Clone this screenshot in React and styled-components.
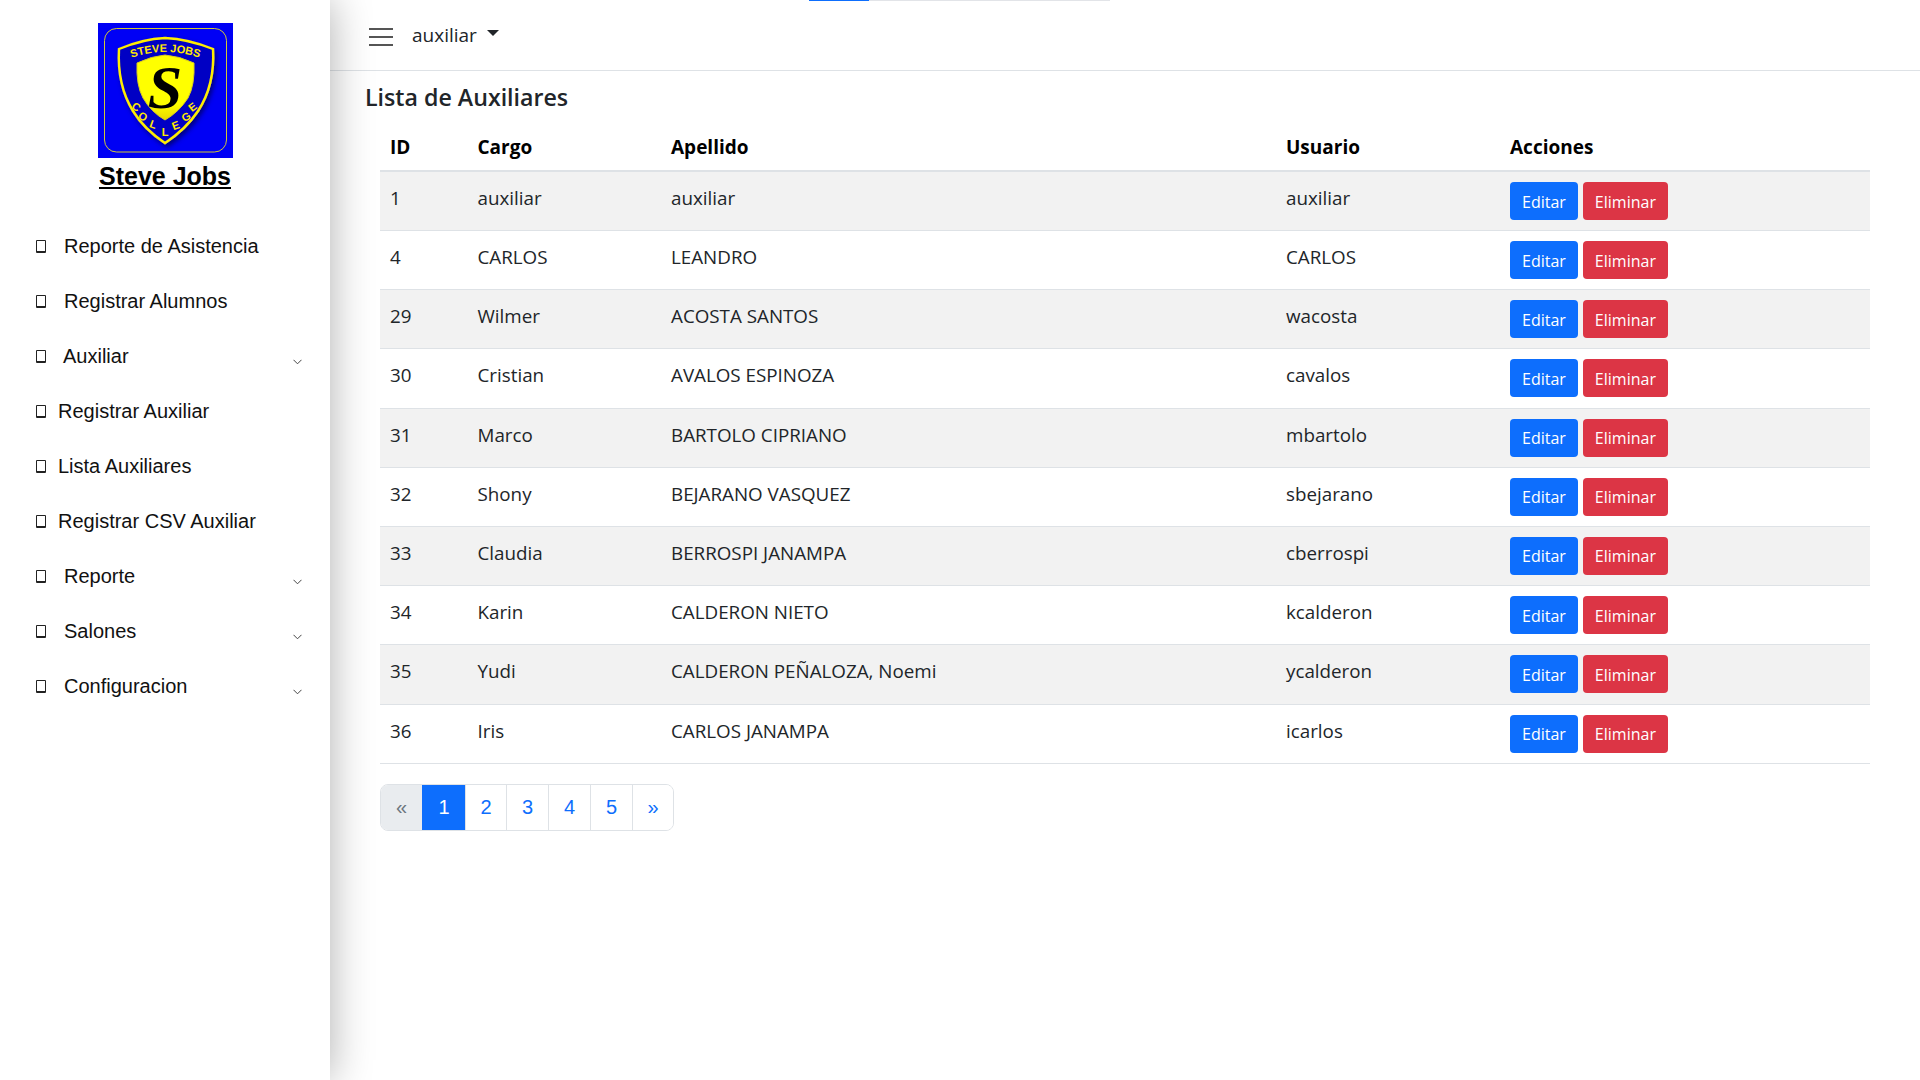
import React from "react";
import styled, { createGlobalStyle } from "styled-components";

const GlobalStyle = createGlobalStyle`
	* {
		box-sizing: border-box;
	}
	html,
	body {
		margin: 0;
		padding: 0;
		height: 100%;
		background: #fff;
	}
`;

const menuItems = [
	{ label: "Reporte de Asistencia", gap: 18.5 },
	{ label: "Registrar Alumnos", gap: 18.5 },
	{ label: "Auxiliar", gap: 17.5, arrow: true },
	{ label: "Registrar Auxiliar", gap: 12.5 },
	{ label: "Lista Auxiliares", gap: 12.5 },
	{ label: "Registrar CSV Auxiliar", gap: 12.5 },
	{ label: "Reporte", gap: 18.5, arrow: true },
	{ label: "Salones", gap: 18.5, arrow: true },
	{ label: "Configuracion", gap: 18.5, arrow: true },
];

const rows = [
	["1", "auxiliar", "auxiliar", "auxiliar"],
	["4", "CARLOS", "LEANDRO", "CARLOS"],
	["29", "Wilmer", "ACOSTA SANTOS", "wacosta"],
	["30", "Cristian", "AVALOS ESPINOZA", "cavalos"],
	["31", "Marco", "BARTOLO CIPRIANO", "mbartolo"],
	["32", "Shony", "BEJARANO VASQUEZ", "sbejarano"],
	["33", "Claudia", "BERROSPI JANAMPA", "cberrospi"],
	["34", "Karin", "CALDERON NIETO", "kcalderon"],
	["35", "Yudi", "CALDERON PEÑALOZA, Noemi", "ycalderon"],
	["36", "Iris", "CARLOS JANAMPA", "icarlos"],
];

const college = [
	["C", 36, 87, 38],
	["O", 43, 97, 30],
	["L", 54, 105, 20],
	["L", 67, 113, 0],
	["E", 79, 106, -20],
	["G", 90, 97, -30],
	["E", 97, 87, -38],
];

const Logo = () => (
	<LogoSvg viewBox="0 0 135 135" role="img" aria-label="Steve Jobs College">
		<defs>
			<filter id="shieldShadow" x="-20%" y="-20%" width="140%" height="140%">
				<feDropShadow dx="2" dy="3" stdDeviation="2.5" floodColor="#000050" floodOpacity="0.75" />
			</filter>
			<linearGradient id="innerShield" x1="0" y1="0" x2="0" y2="1">
				<stop offset="0" stopColor="#ffff00" />
				<stop offset="0.75" stopColor="#ffff00" />
				<stop offset="1" stopColor="#e8d800" />
			</linearGradient>
			<path id="topArc" d="M30 36 Q67 22 105 36" fill="none" />
		</defs>
		<rect width="135" height="135" fill="#0000f5" />
		<rect x="6.5" y="5.5" width="122" height="123.5" rx="12" fill="none" stroke="#e8dc20" strokeWidth="0.9" />
		<path
			d="M21 26 Q45 16 67 15 Q90 16 115 26 Q117 62 100 88 Q88 106 67 120 Q46 106 35 88 Q19 62 21 26Z"
			fill="#0000c4"
			stroke="#ffee00"
			strokeWidth="2.4"
			filter="url(#shieldShadow)"
		/>
		<path
			d="M39 40 Q54 33 67 32 Q81 33 96 40 Q97 62 90 75 Q81 89 67 97 Q53 89 45 75 Q38 62 39 40Z"
			fill="url(#innerShield)"
			stroke="#d8cc20"
			strokeWidth="1"
		/>
		<LogoText fontSize="11" fill="#ffe800">
			<textPath href="#topArc" startOffset="50%" textAnchor="middle">
				STEVE JOBS
			</textPath>
		</LogoText>
		<LogoMark x="67" y="85" textAnchor="middle" fontSize="62" fill="#000">
			S
		</LogoMark>
		{college.map(([letter, x, y, angle], i) => (
			<LogoText
				key={i}
				x={x}
				y={y}
				fontSize="11"
				fill="#ffe800"
				textAnchor="middle"
				transform={`rotate(${angle} ${x} ${y})`}
			>
				{letter}
			</LogoText>
		))}
	</LogoSvg>
);

const Chevron = () => (
	<ChevronSvg viewBox="0 0 9 6">
		<path d="M0.5 0.8 L4.5 4.8 L8.5 0.8" fill="none" stroke="#444" strokeWidth="1" />
	</ChevronSvg>
);

const App = () => {
	return (
		<Page>
			<GlobalStyle />
			<Sidebar>
				<LogoBlock>
					<Logo />
					<BrandName>Steve Jobs</BrandName>
				</LogoBlock>
				<Menu>
					{menuItems.map((item) => (
						<MenuItem key={item.label} $gap={item.gap}>
							<MissingIcon />
							<MenuLabel>{item.label}</MenuLabel>
							{item.arrow && <Chevron />}
						</MenuItem>
					))}
				</Menu>
			</Sidebar>
			<Main>
				<ProgressTrack>
					<ProgressFill />
				</ProgressTrack>
				<Topbar>
					<Burger>
						<span />
						<span />
						<span />
					</Burger>
					<UserToggle>auxiliar</UserToggle>
					<Caret />
				</Topbar>
				<Content>
					<Title>Lista de Auxiliares</Title>
					<Table>
						<colgroup>
							<col width="87.5" />
							<col width="193.5" />
							<col width="615" />
							<col width="224" />
							<col width="370" />
						</colgroup>
						<thead>
							<tr>
								<Th>ID</Th>
								<Th>Cargo</Th>
								<Th>Apellido</Th>
								<Th>Usuario</Th>
								<Th>Acciones</Th>
							</tr>
						</thead>
						<tbody>
							{rows.map((row, i) => (
								<Row key={row[0]} $striped={i % 2 === 0}>
									{row.map((cell, j) => (
										<Td key={j}>{cell}</Td>
									))}
									<ActionCell>
										<Actions>
											<ActionButton $color="#0d6efd">Editar</ActionButton>
											<ActionButton $color="#dc3545">Eliminar</ActionButton>
										</Actions>
									</ActionCell>
								</Row>
							))}
						</tbody>
					</Table>
					<Pagination>
						<PageCell $width={41} $disabled>
							«
						</PageCell>
						<PageCell $width={43} $active>
							1
						</PageCell>
						<PageCell $width={41}>2</PageCell>
						<PageCell $width={42}>3</PageCell>
						<PageCell $width={42}>4</PageCell>
						<PageCell $width={42}>5</PageCell>
						<PageCell $width={41}>»</PageCell>
					</Pagination>
				</Content>
			</Main>
		</Page>
	);
};

export default App;

const bodyFont = `"Open Sans", "Noto Sans", sans-serif`;
const navFont = `"Liberation Sans", Arial, sans-serif`;

const Page = styled.div`
	display: flex;
	width: 1920px;
	height: 1080px;
	overflow: hidden;
	background: #fff;
`;
const Sidebar = styled.aside`
	position: relative;
	z-index: 2;
	flex: 0 0 330px;
	height: 100%;
	background: #fff;
	box-shadow: 0 0 40px rgba(0, 0, 0, 0.32);
	font-family: ${navFont};
`;
const LogoBlock = styled.div`
	display: flex;
	flex-direction: column;
	align-items: center;
	padding-top: 23px;
`;
const LogoSvg = styled.svg`
	display: block;
	width: 135px;
	height: 135px;
`;
const LogoText = styled.text`
	font-family: ${navFont};
	font-weight: 700;
`;
const LogoMark = styled.text`
	font-family: "Liberation Serif", serif;
	font-weight: 700;
	font-style: italic;
`;
const BrandName = styled.div`
	margin-top: 2px;
	font-size: 25px;
	line-height: 33px;
	font-weight: 700;
	color: #000;
	text-decoration: underline;
`;
const Menu = styled.nav`
	display: flex;
	flex-direction: column;
	margin-top: 26px;
`;
const MenuItem = styled.div`
	display: flex;
	align-items: center;
	height: 55px;
	padding: 0 28px 0 35.5px;
	gap: ${({ $gap }) => $gap}px;
	color: #111;
	font-size: 20px;
`;
const MissingIcon = styled.span`
	flex: 0 0 10px;
	width: 10px;
	height: 13px;
	border: 1px solid #222;
	border-bottom-width: 2px;
	border-radius: 1px;
`;
const MenuLabel = styled.span`
	flex: 1;
	white-space: nowrap;
`;
const ChevronSvg = styled.svg`
	width: 9px;
	height: 6px;
	margin-top: 10px;
`;
const Main = styled.main`
	position: relative;
	flex: 1;
	min-width: 0;
	font-family: ${bodyFont};
	color: #212529;
`;
const ProgressTrack = styled.div`
	position: absolute;
	top: 0;
	left: 479px;
	width: 301px;
	height: 1px;
	background: #e2e4e8;
`;
const ProgressFill = styled.div`
	width: 60px;
	height: 100%;
	background: #0d6efd;
`;
const Topbar = styled.header`
	display: flex;
	align-items: center;
	height: 71px;
	padding: 0 0 0 39px;
	border-bottom: 1px solid #dee2e6;
`;
const Burger = styled.div`
	display: flex;
	flex-direction: column;
	justify-content: space-between;
	width: 24px;
	height: 18px;
	margin-top: 3px;

	span {
		display: block;
		height: 2px;
		background: #555;
	}
`;
const UserToggle = styled.span`
	margin-left: 19px;
	font-size: 19px;
	line-height: 26px;
	color: #212529;
	margin-top: -1px;
`;
const Caret = styled.span`
	margin-left: 10px;
	margin-top: -4px;
	border-top: 6px solid #212529;
	border-left: 6px solid transparent;
	border-right: 6px solid transparent;
`;
const Content = styled.div`
	padding: 10px 50px 0 35px;
`;
const Title = styled.h1`
	margin: 0;
	font-size: 23.2px;
	line-height: 32px;
	font-weight: 600;
	color: #212529;
`;
const Table = styled.table`
	width: 1490px;
	margin: 12px 0 0 15px;
	table-layout: fixed;
	border-collapse: collapse;
	font-size: 18.8px;
`;
const Th = styled.th`
	height: 46px;
	padding: 0 10px 2px;
	text-align: left;
	font-size: 19px;
	font-weight: 700;
	color: #000;
	border-bottom: 2px solid #dee2e6;
`;
const Row = styled.tr`
	height: 59.2px;
	background: ${({ $striped }) => ($striped ? "#f2f2f2" : "#fff")};
	border-bottom: 1px solid #dee2e6;
`;
const Td = styled.td`
	padding: 13px 10px 10px;
	vertical-align: top;
	line-height: 26px;
	color: #212529;
`;
const ActionCell = styled(Td)`
	padding-top: 10px;
`;
const Actions = styled.div`
	display: flex;
	gap: 5px;
`;
const ActionButton = styled.button`
	height: 38px;
	padding: 1px 12px 0;
	border: 0;
	border-radius: 4px;
	background: ${({ $color }) => $color};
	color: #fff;
	font-family: ${bodyFont};
	font-size: 16px;
`;
const Pagination = styled.div`
	display: inline-flex;
	height: 47px;
	margin: 20px 0 0 15px;
	border: 1px solid #dee2e6;
	border-radius: 8px;
	overflow: hidden;
	font-family: ${navFont};
	font-size: 20px;
`;
const PageCell = styled.div`
	display: flex;
	align-items: center;
	justify-content: center;
	width: ${({ $width }) => $width}px;
	color: ${({ $active, $disabled }) => ($active ? "#fff" : $disabled ? "#6c757d" : "#0d6efd")};
	background: ${({ $active, $disabled }) => ($active ? "#0d6efd" : $disabled ? "#e9ecef" : "#fff")};
	border-left: 1px solid ${({ $active }) => ($active ? "#0d6efd" : "#dee2e6")};

	&:first-child {
		border-left: 0;
	}
`;
